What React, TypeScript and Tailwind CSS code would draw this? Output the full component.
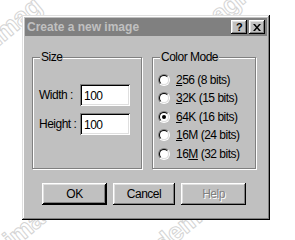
import React from "react";

const raised =
    "shadow-[inset_-1px_-1px_#000,inset_1px_1px_#fff,inset_-2px_-2px_#808080,inset_2px_2px_#dfdfdf]";
const sunken =
    "shadow-[inset_1px_1px_#808080,inset_-1px_-1px_#fff,inset_2px_2px_#000,inset_-2px_-2px_#dfdfdf]";
const watermark =
    "pointer-events-none absolute -rotate-[40deg] text-[26px] font-bold text-transparent [-webkit-text-stroke:1px_#d4d4d4]";

function Radio({ checked }: { checked?: boolean }) {
    return (
        <div className="flex h-[12px] w-[12px] shrink-0 rounded-full border border-t-[#808080] border-l-[#808080] border-b-white border-r-white">
            <div className="flex flex-1 items-center justify-center rounded-full border border-t-black border-l-black border-b-[#dfdfdf] border-r-[#dfdfdf] bg-white">
                {checked && <div className="h-[4px] w-[4px] rounded-full bg-black" />}
            </div>
        </div>
    );
}

function GroupBox({ label, className, children }: { label: string; className: string; children?: React.ReactNode }) {
    return (
        <div className={"relative border border-[#808080] shadow-[1px_1px_#fff,inset_1px_1px_#fff] " + className}>
            <span className="absolute left-[7px] top-[-8px] bg-[#c0c0c0] px-[1px] leading-[14px]">{label}</span>
            {children}
        </div>
    );
}

const modes: { pre: string; u: string; post: string; checked?: boolean }[] = [
    { pre: "", u: "2", post: "56 (8 bits)" },
    { pre: "", u: "3", post: "2K (15 bits)" },
    { pre: "", u: "6", post: "4K (16 bits)", checked: true },
    { pre: "", u: "1", post: "6M (24 bits)" },
    { pre: "16", u: "M", post: " (32 bits)" },
];

export default function App() {
    return (
        <div
            className="relative h-[240px] w-[295px] overflow-hidden bg-white text-[12px] tracking-[-0.5px] text-black"
            style={{ fontFamily: '"Liberation Sans", Arial, sans-serif' }}
        >
            {/* watermark fragments behind the dialog */}
            <span className={watermark + " left-[-14px] top-[2px]"}>imag</span>
            <span className={watermark + " left-[196px] top-[-8px]"}>nagi</span>
            <span className={watermark + " left-[2px] top-[210px]"}>ima</span>
            <span className={watermark + " left-[150px] top-[206px]"}>demo</span>

            <div className="relative ml-[22px] mt-[15px] flex h-[205px] w-[248px] flex-col bg-[#c0c0c0] p-[3px] shadow-[inset_-1px_-1px_#000,inset_1px_1px_#dfdfdf,inset_-2px_-2px_#808080,inset_2px_2px_#fff]">
                <div className="flex h-[18px] items-center bg-[#808080] pl-[2px] pr-[2px]">
                    <span className="flex-1 text-[12px] font-bold tracking-[0px] text-[#c0c0c0]">Create a new image</span>
                    <div className="flex gap-[2px]">
                        <div className={"flex h-[14px] w-[16px] items-center justify-center bg-[#c0c0c0] text-[11px] font-bold " + raised}>?</div>
                        <div className={"flex h-[14px] w-[16px] items-center justify-center bg-[#c0c0c0] " + raised}>
                            <svg width="8" height="7" viewBox="0 0 8 7">
                                <path d="M0 0h2l2 2.5L6 0h2L5 3.5 8 7H6L4 4.5 2 7H0l3-3.5z" fill="#000" />
                            </svg>
                        </div>
                    </div>
                </div>

                <div className="mt-[21px] flex gap-[10px] pl-[7px]">
                    <GroupBox label="Size" className="h-[112px] w-[110px]">
                        <div className="flex flex-col gap-[7px] pl-[6px] pt-[26px]">
                            <div className="flex items-center">
                                <span className="w-[41px]">Width :</span>
                                <div className={"h-[22px] w-[50px] bg-white pl-[4px] pt-[3px] " + sunken}>100</div>
                            </div>
                            <div className="flex items-center">
                                <span className="w-[41px]">Height :</span>
                                <div className={"h-[22px] w-[50px] bg-white pl-[4px] pt-[3px] " + sunken}>100</div>
                            </div>
                        </div>
                    </GroupBox>
                    <GroupBox label="Color Mode" className="h-[112px] w-[104px]">
                        <div className="flex flex-col gap-[5.5px] pl-[5px] pt-[15px]">
                            {modes.map((m, i) => (
                                <div key={i} className="flex h-[13px] items-center gap-[6px]">
                                    <Radio checked={m.checked} />
                                    <span>
                                        {m.pre}
                                        <span className="underline underline-offset-[1px]">{m.u}</span>
                                        {m.post}
                                    </span>
                                </div>
                            ))}
                        </div>
                    </GroupBox>
                </div>

                <div className="mt-[14px] flex gap-[6px] pl-[17px]">
                    <div className="flex h-[22px] w-[65px] items-center justify-center bg-[#c0c0c0] shadow-[inset_-1px_-1px_#000,inset_1px_1px_#fff,inset_-2px_-2px_#000,inset_2px_2px_#dfdfdf,inset_-3px_-3px_#808080]">OK</div>
                    <div className={"flex h-[22px] w-[62px] items-center justify-center bg-[#c0c0c0] " + raised}>Cancel</div>
                    <div className={"flex h-[22px] w-[65px] items-center justify-center bg-[#c0c0c0] text-[#808080] [text-shadow:1px_1px_#fff] " + raised}>Help</div>
                </div>
            </div>
        </div>
    );
}
